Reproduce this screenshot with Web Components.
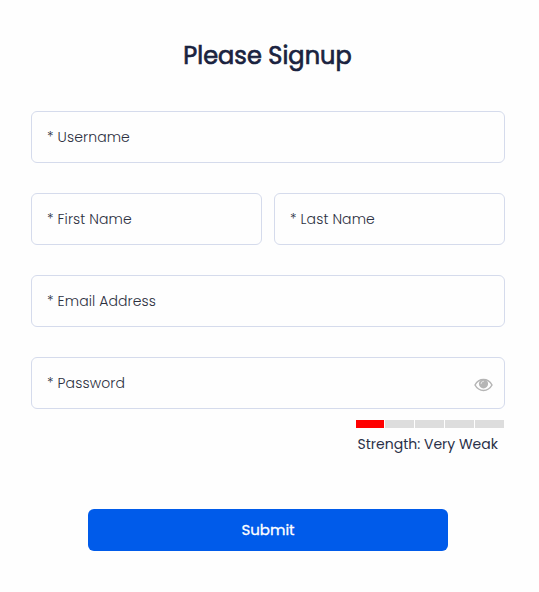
<!DOCTYPE html>
<html lang="en">
<head>
<meta charset="UTF-8">
<meta name="viewport" content="width=device-width, initial-scale=1.0">
<title>Please Signup</title>
<style>
  body {
    margin: 0;
    background: #fefefe;
    color: #1a2340;
    font-family: Poppins, Inter, "Open Sans", sans-serif;
  }
</style>
</head>
<body>
<signup-form heading="Please Signup">
  <form-field name="username">* Username</form-field>
  <field-row>
    <form-field name="first">* First Name</form-field>
    <form-field name="last">* Last Name</form-field>
  </field-row>
  <form-field name="email">* Email Address</form-field>
  <form-field name="password" type="password">* Password<eye-toggle slot="end"></eye-toggle></form-field>
  <strength-meter level="1">Strength: Very Weak</strength-meter>
  <submit-button>Submit</submit-button>
</signup-form>

<script>
class SignupForm extends HTMLElement {
  constructor() {
    super();
    this.attachShadow({ mode: 'open' });
  }

  connectedCallback() {
    this.shadowRoot.innerHTML = `
      <style>
        :host {
          display: block;
          box-sizing: border-box;
          width: 539px;
          height: 592px;
          padding: 38px 35px 0 31px;
        }
        h2 {
          margin: 0 0 37px;
          font-size: 24px;
          line-height: 36px;
          font-weight: 400;
          letter-spacing: 0.04px;
          -webkit-text-stroke: 0.7px currentColor;
          text-align: center;
        }
        form {
          display: flex;
          flex-direction: column;
          gap: 30px;
          margin-right: -1px;
        }
      </style>
      <h2>${this.getAttribute('heading')}</h2>
      <form><slot></slot></form>
    `;
  }
}

class FieldRow extends HTMLElement {
  constructor() {
    super();
    this.attachShadow({ mode: 'open' });
    this.shadowRoot.innerHTML = `
      <style>
        :host {
          display: grid;
          grid-template-columns: 1fr 1fr;
          gap: 12px;
        }
      </style>
      <slot></slot>
    `;
  }
}

class FormField extends HTMLElement {
  constructor() {
    super();
    this.attachShadow({ mode: 'open' });
  }

  connectedCallback() {
    this.shadowRoot.innerHTML = `
      <style>
        :host {
          display: block;
        }
        .box {
          display: grid;
          grid-template-columns: 1fr auto;
          align-items: center;
          box-sizing: border-box;
          height: 52px;
          padding: 0 11px 0 15px;
          border: 1px solid #d5dbec;
          border-radius: 6px;
        }
        .box:focus-within {
          border-color: #005bea;
        }
        input, label {
          grid-area: 1 / 1;
          font: 300 14px/24px Poppins, Inter, sans-serif;
        }
        input {
          width: 100%;
          min-width: 0;
          padding: 0;
          border: 0;
          outline: 0;
          background: none;
          color: inherit;
        }
        label {
          color: #2c303e;
          letter-spacing: 0.1px;
          white-space: nowrap;
          pointer-events: none;
        }
        input:not(:placeholder-shown) + label {
          visibility: hidden;
        }
      </style>
      <div class="box">
        <input id="input" type="${this.getAttribute('type') || 'text'}" name="${this.getAttribute('name')}" placeholder=" ">
        <label for="input"><slot></slot></label>
        <slot name="end"></slot>
      </div>
    `;
  }
}

class EyeToggle extends HTMLElement {
  constructor() {
    super();
    this.attachShadow({ mode: 'open' });
    this.shadowRoot.innerHTML = `
      <style>
        :host {
          display: block;
          height: 14px;
          margin-top: 3px;
          cursor: pointer;
        }
        svg {
          display: block;
        }
      </style>
      <svg width="19" height="14" viewBox="0 0 19 14">
        <path d="M1 7C3 3.4 6 1.6 9.5 1.6S16 3.4 18 7C16 10.6 13 12.4 9.5 12.4S3 10.6 1 7Z" fill="none" stroke="#b5b5b5" stroke-width="1.5"/>
        <circle cx="9.5" cy="5.8" r="4.6" fill="#b5b5b5"/>
        <path d="M7 5.7A2.5 2.5 0 0 1 9.5 3.2" fill="none" stroke="#eee" stroke-width=".8" stroke-linecap="round"/>
      </svg>
    `;
  }

  connectedCallback() {
    this.addEventListener('click', () => {
      const input = this.parentElement.shadowRoot.querySelector('input');
      input.type = input.type === 'password' ? 'text' : 'password';
    });
  }
}

class StrengthMeter extends HTMLElement {
  constructor() {
    super();
    this.attachShadow({ mode: 'open' });
  }

  connectedCallback() {
    const level = Number(this.getAttribute('level'));
    const bars = [1, 2, 3, 4, 5].map(n => `<i class="${n <= level ? 'on' : ''}"></i>`).join('');
    this.shadowRoot.innerHTML = `
      <style>
        :host {
          display: block;
          align-self: flex-end;
          width: 148px;
          margin: -19px 1px 0 0;
        }
        .bars {
          display: grid;
          grid-template-columns: 28px repeat(4, 29px);
          gap: 1px;
          height: 8px;
        }
        i {
          background: #ddd;
        }
        i.on {
          background: #f00;
        }
        p {
          margin: 4px 0 0 1.5px;
          color: #2a3048;
          font-size: 14px;
          line-height: 24px;
          font-weight: 400;
          white-space: nowrap;
        }
      </style>
      <div class="bars">${bars}</div>
      <p><slot></slot></p>
    `;
  }
}

class SubmitButton extends HTMLElement {
  constructor() {
    super();
    this.attachShadow({ mode: 'open' });
    this.shadowRoot.innerHTML = `
      <style>
        :host {
          display: block;
          align-self: center;
          margin-top: 23px;
        }
        button {
          display: block;
          width: 360px;
          height: 42px;
          padding: 0;
          border: 0;
          border-radius: 6px;
          background: #005bea;
          color: #fff;
          font: 400 15px/24px Poppins, Inter, sans-serif;
          -webkit-text-stroke: 0.3px currentColor;
          cursor: pointer;
        }
      </style>
      <button type="button"><slot></slot></button>
    `;
  }
}

customElements.define('signup-form', SignupForm);
customElements.define('field-row', FieldRow);
customElements.define('form-field', FormField);
customElements.define('eye-toggle', EyeToggle);
customElements.define('strength-meter', StrengthMeter);
customElements.define('submit-button', SubmitButton);
</script>
</body>
</html>
